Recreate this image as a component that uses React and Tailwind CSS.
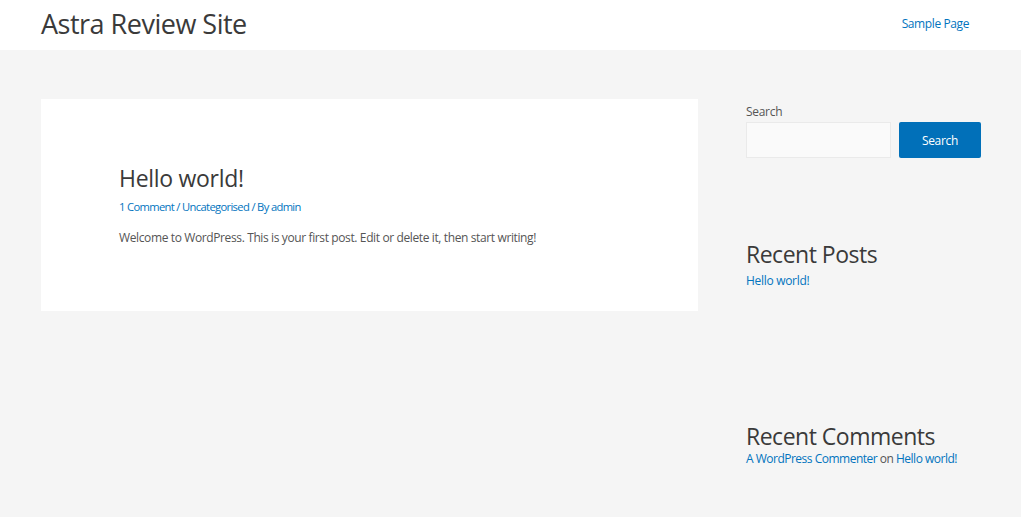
import React from "react";

export default function App() {
  const font = { fontFamily: '"Open Sans", "Noto Sans", sans-serif' };
  return (
    <div className="w-[1024px] h-[517px] bg-white flex flex-col overflow-hidden" style={font}>
      <header className="h-[50px] shrink-0 bg-white flex items-center justify-between pl-[41px] pr-[55px]">
        <div className="text-[27px] text-[#3a3a3a] leading-none tracking-[-0.5px] -mt-[3px]">Astra Review Site</div>
        <a className="text-[12px] text-[#0274be] tracking-[-0.4px] -mt-[2px]">Sample Page</a>
      </header>
      <div className="flex-1 bg-[#f5f5f5] mr-[3px] flex gap-[48px] pl-[41px] pt-[49px]">
        <main className="w-[657px] h-[212px] bg-white pl-[78px] pt-[65px]">
          <h1 className="text-[23px] leading-[29px] text-[#3a3a3a] tracking-[-0.3px]">Hello world!</h1>
          <div className="text-[11.2px] leading-[18px] text-[#0274be] mt-[5px] tracking-[-0.65px]">
            <a>1 Comment</a> / <a>Uncategorised</a> / By <a>admin</a>
          </div>
          <p className="text-[12px] leading-[18px] text-[#555] mt-[13px] tracking-[-0.38px]">
            Welcome to WordPress. This is your first post. Edit or delete it, then start writing!
          </p>
        </main>
        <aside className="w-[235px] flex flex-col">
          <label className="text-[12px] leading-[18px] text-[#555] mt-[4px] tracking-[-0.3px]">Search</label>
          <div className="flex gap-[8px] mt-[1px]">
            <div className="w-[145px] h-[36px] bg-[#fafafa] border border-[#eaeaea]" />
            <button className="w-[82px] h-[36px] bg-[#0170b9] text-white text-[12px] rounded-[2px] tracking-[-0.3px] pt-[2px]">Search</button>
          </div>
          <h2 className="text-[23px] leading-[29px] text-[#3a3a3a] mt-[82px] tracking-[-0.5px]">Recent Posts</h2>
          <a className="text-[12px] leading-[18px] text-[#0274be] mt-[3px] tracking-[-0.3px]">Hello world!</a>
          <h2 className="text-[23px] leading-[29px] text-[#3a3a3a] mt-[132px] tracking-[-0.5px]">Recent Comments</h2>
          <div className="text-[12px] leading-[16px] text-[#555] tracking-[-0.5px]">
            <a className="text-[#0274be]">A WordPress Commenter</a> on <a className="text-[#0274be]">Hello world!</a>
          </div>
        </aside>
      </div>
    </div>
  );
}
